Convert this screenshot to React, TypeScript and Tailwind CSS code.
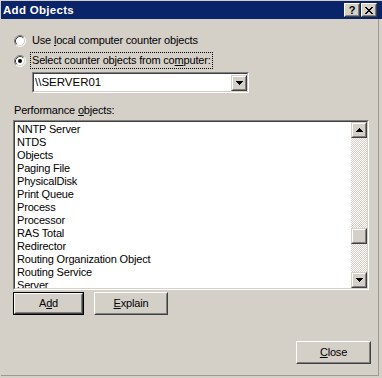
import React from "react";

function Radio({ checked }: { checked?: boolean }) {
  return (
    <svg width="12" height="12" viewBox="0 0 12 12" className="shrink-0">
      <circle cx="6" cy="6" r="5" fill="#ffffff" />
      <path d="M 2.11 9.89 A 5.5 5.5 0 0 1 9.89 2.11" stroke="#808080" strokeWidth="1" fill="none" />
      <path d="M 9.89 2.11 A 5.5 5.5 0 0 1 2.11 9.89" stroke="#ffffff" strokeWidth="1" fill="none" />
      <path d="M 2.82 9.18 A 4.5 4.5 0 0 1 9.18 2.82" stroke="#404040" strokeWidth="1" fill="none" />
      <path d="M 9.18 2.82 A 4.5 4.5 0 0 1 2.82 9.18" stroke="#d4d0c8" strokeWidth="1" fill="none" />
      {checked && <circle cx="6" cy="6" r="2" fill="#000000" />}
    </svg>
  );
}

function ArrowUp() {
  return (
    <svg width="7" height="4" viewBox="0 0 7 4" shapeRendering="crispEdges">
      <rect x="3" y="0" width="1" height="1" fill="#000" />
      <rect x="2" y="1" width="3" height="1" fill="#000" />
      <rect x="1" y="2" width="5" height="1" fill="#000" />
      <rect x="0" y="3" width="7" height="1" fill="#000" />
    </svg>
  );
}

function ArrowDown() {
  return (
    <svg width="7" height="4" viewBox="0 0 7 4" shapeRendering="crispEdges">
      <rect x="0" y="0" width="7" height="1" fill="#000" />
      <rect x="1" y="1" width="5" height="1" fill="#000" />
      <rect x="2" y="2" width="3" height="1" fill="#000" />
      <rect x="3" y="3" width="1" height="1" fill="#000" />
    </svg>
  );
}

function CloseGlyph() {
  return (
    <svg width="8" height="7" viewBox="0 0 8 7" shapeRendering="crispEdges">
      <rect x="0" y="0" width="2" height="1" fill="#000" />
      <rect x="6" y="0" width="2" height="1" fill="#000" />
      <rect x="1" y="1" width="2" height="1" fill="#000" />
      <rect x="5" y="1" width="2" height="1" fill="#000" />
      <rect x="2" y="2" width="4" height="1" fill="#000" />
      <rect x="3" y="3" width="2" height="1" fill="#000" />
      <rect x="2" y="4" width="4" height="1" fill="#000" />
      <rect x="1" y="5" width="2" height="1" fill="#000" />
      <rect x="5" y="5" width="2" height="1" fill="#000" />
      <rect x="0" y="6" width="2" height="1" fill="#000" />
      <rect x="6" y="6" width="2" height="1" fill="#000" />
    </svg>
  );
}

function ScrollBtn({ children }: { children: React.ReactNode }) {
  return (
    <div className="w-[16px] h-[16px] shrink-0 border border-t-[#d4d0c8] border-l-[#d4d0c8] border-b-[#404040] border-r-[#404040] bg-[#d4d0c8]">
      <div className="w-full h-full border border-t-white border-l-white border-b-[#808080] border-r-[#808080] flex items-center justify-center">
        {children}
      </div>
    </div>
  );
}

function TitleBtn({ children }: { children: React.ReactNode }) {
  return (
    <div className="w-[16px] h-[14px] border border-t-white border-l-white border-b-[#404040] border-r-[#404040] bg-[#d4d0c8]">
      <div className="w-full h-full border border-t-[#d4d0c8] border-l-[#d4d0c8] border-b-[#808080] border-r-[#808080] flex items-center justify-center">
        {children}
      </div>
    </div>
  );
}

function PushButton({ children, className, isDefault }: { children: React.ReactNode; className: string; isDefault?: boolean }) {
  const inner = (
    <div className="w-full h-full border border-t-white border-l-white border-b-[#404040] border-r-[#404040] bg-[#d4d0c8]">
      <div className="w-full h-full border border-t-[#d4d0c8] border-l-[#d4d0c8] border-b-[#808080] border-r-[#808080] flex items-center justify-center leading-[13px]">
        {children}
      </div>
    </div>
  );
  if (isDefault) {
    return <div className={`border border-black ${className}`}>{inner}</div>;
  }
  return <div className={className}>{inner}</div>;
}

const items = [
  "NNTP Server",
  "NTDS",
  "Objects",
  "Paging File",
  "PhysicalDisk",
  "Print Queue",
  "Process",
  "Processor",
  "RAS Total",
  "Redirector",
  "Routing Organization Object",
  "Routing Service",
  "Server",
];

export default function App() {
  return (
    <div className="w-[382px] h-[378px] bg-[#d4d0c8] font-['Liberation_Sans',Arial,sans-serif] text-[11px] text-black overflow-hidden pt-[1px] pl-[1px] flex flex-col">
      <div className="h-[18px] shrink-0 bg-[#0a246a] flex items-center justify-between pl-[2px] pr-[5px]">
        <span className="text-white font-bold text-[11.5px] tracking-[0.3px] leading-[13px]">Add Objects</span>
        <div className="flex gap-[1px]">
          <TitleBtn>
            <span className="font-bold text-[11px] leading-[10px]">?</span>
          </TitleBtn>
          <TitleBtn>
            <CloseGlyph />
          </TitleBtn>
        </div>
      </div>

      <div className="w-[378px] h-[357px] border-r border-b border-r-[#9c9a94] border-b-[#9c9a94] flex flex-col pl-[12px] tracking-[-0.18px]">
        <div className="mt-[15px] h-[13px] flex items-center">
          <div className="ml-[1px]">
            <Radio />
          </div>
          <span className="ml-[6px] leading-[13px]">
            Use <span className="underline">l</span>ocal computer counter objects
          </span>
        </div>

        <div className="mt-[5px] h-[17px] flex items-center">
          <div className="ml-[1px]">
            <Radio checked />
          </div>
          <span className="ml-[4px] border border-dotted border-black px-[1px] py-[1px] leading-[13px]">
            Select counter objects from co<span className="underline">m</span>puter:
          </span>
        </div>

        <div className="ml-[19px] mt-[3px] w-[217px] h-[21px] border border-t-[#808080] border-l-[#808080] border-b-white border-r-white">
          <div className="w-full h-full border border-t-[#404040] border-l-[#404040] border-b-[#d4d0c8] border-r-[#d4d0c8] bg-white flex items-center">
            <span className="pl-[1px] flex-1 leading-[13px] text-[11.5px] tracking-[0px]">\\SERVER01</span>
            <ScrollBtn>
              <ArrowDown />
            </ScrollBtn>
          </div>
        </div>

        <div className="mt-[11px] ml-[1px] leading-[13px]">
          Performance <span className="underline">o</span>bjects:
        </div>

        <div className="mt-[3px] w-[356px] h-[170px] border border-t-[#808080] border-l-[#808080] border-b-white border-r-white">
          <div className="w-full h-full border border-t-[#404040] border-l-[#404040] border-b-[#d4d0c8] border-r-[#d4d0c8] bg-white flex overflow-hidden">
            <div className="flex-1 flex flex-col pl-[2px] pt-[1px] overflow-hidden">
              {items.map((it) => (
                <div key={it} className="h-[13px] leading-[13px] shrink-0 whitespace-nowrap">
                  {it}
                </div>
              ))}
            </div>
            <div className="w-[16px] flex flex-col">
              <ScrollBtn>
                <ArrowUp />
              </ScrollBtn>
              <div className="flex-1 bg-[image:repeating-conic-gradient(#ffffff_0%_25%,#d4d0c8_0%_50%)] bg-[length:2px_2px]">
                <div className="mt-[90px]">
                  <ScrollBtn>
                    <span />
                  </ScrollBtn>
                </div>
              </div>
              <ScrollBtn>
                <ArrowDown />
              </ScrollBtn>
            </div>
          </div>
        </div>

        <div className="mt-[2px] flex">
          <PushButton isDefault className="w-[71px] h-[23px]">
            <span>
              A<span className="underline">d</span>d
            </span>
          </PushButton>
          <PushButton className="ml-[10px] w-[74px] h-[23px]">
            <span>
              <span className="underline">E</span>xplain
            </span>
          </PushButton>
        </div>

        <div className="mt-[26px] flex justify-end pr-[7px]">
          <PushButton className="w-[75px] h-[23px]">
            <span>
              <span className="underline">C</span>lose
            </span>
          </PushButton>
        </div>
      </div>
    </div>
  );
}
